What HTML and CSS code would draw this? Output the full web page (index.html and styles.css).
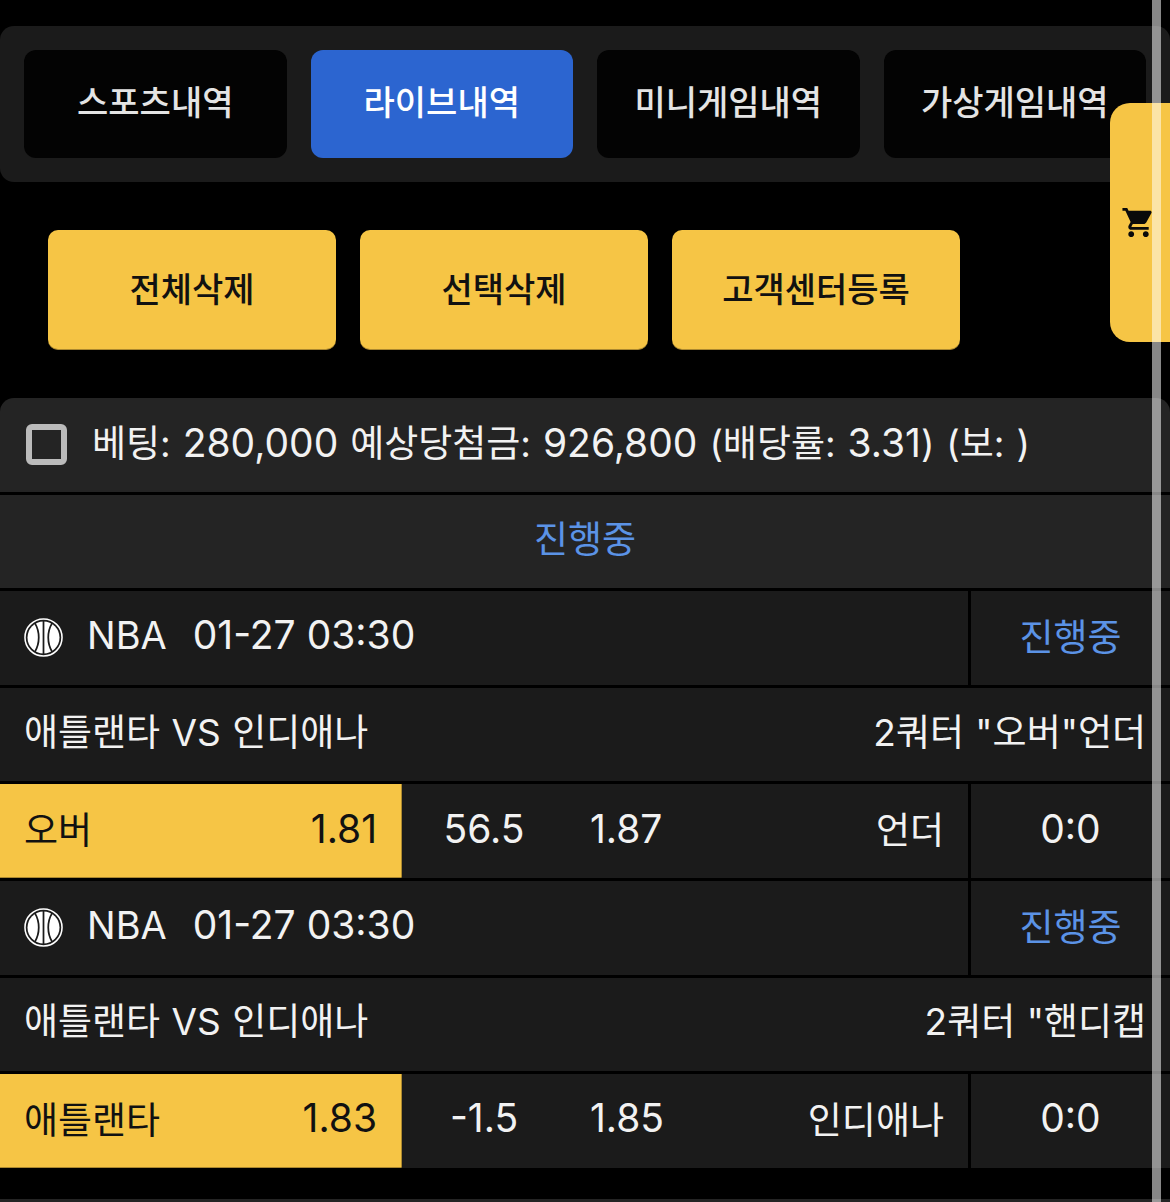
FILE: index.html
```html
<!DOCTYPE html>
<html lang="ko">
<head>
  <meta charset="utf-8">
  <title>라이브내역</title>
  <link rel="stylesheet" href="styles.css">
</head>
<body>
  <div class="tabs">
    <div class="tab">스포츠내역</div>
    <div class="tab active">라이브내역</div>
    <div class="tab">미니게임내역</div>
    <div class="tab">가상게임내역</div>
  </div>

  <div class="actions">
    <div class="action-button">전체삭제</div>
    <div class="action-button">선택삭제</div>
    <div class="action-button">고객센터등록</div>
  </div>

  <div class="bet-card">
    <div class="row summary">
      <span class="checkbox"></span>
      <span>베팅: <span class="num">280,000</span> 예상당첨금: <span class="num">926,800</span> (배당률: <span class="num">3.31</span>) (보: )</span>
    </div>
    <div class="row state">진행중</div>

    <div class="row">
      <div class="cell-main">
        <svg class="ball" viewBox="0 0 40 40">
          <circle cx="20" cy="20" r="19" fill="none" stroke="#fff" stroke-width="1.6"/>
          <circle cx="20" cy="20" r="16.4" fill="#fff"/>
          <path d="M20 3V37M11 5C16.5 14 16.5 26 11 35M29 5C23.5 14 23.5 26 29 35" fill="none" stroke="#1b1b1b" stroke-width="1.8"/>
        </svg>
        <span class="league">NBA</span>
        <span class="num">01-27 03:30</span>
      </div>
      <div class="cell-side status">진행중</div>
    </div>
    <div class="row teams">
      <span>애틀랜타 VS 인디애나</span>
      <span>2쿼터 "오버"언더</span>
    </div>
    <div class="row odds">
      <div class="pick selected"><span>오버</span><span class="num">1.81</span></div>
      <div class="line num">56.5</div>
      <div class="pick other"><span class="num">1.87</span><span>언더</span></div>
      <div class="cell-side num">0:0</div>
    </div>

    <div class="row">
      <div class="cell-main">
        <svg class="ball" viewBox="0 0 40 40">
          <circle cx="20" cy="20" r="19" fill="none" stroke="#fff" stroke-width="1.6"/>
          <circle cx="20" cy="20" r="16.4" fill="#fff"/>
          <path d="M20 3V37M11 5C16.5 14 16.5 26 11 35M29 5C23.5 14 23.5 26 29 35" fill="none" stroke="#1b1b1b" stroke-width="1.8"/>
        </svg>
        <span class="league">NBA</span>
        <span class="num">01-27 03:30</span>
      </div>
      <div class="cell-side status">진행중</div>
    </div>
    <div class="row teams">
      <span>애틀랜타 VS 인디애나</span>
      <span>2쿼터 "핸디캡</span>
    </div>
    <div class="row odds">
      <div class="pick selected"><span>애틀랜타</span><span class="num">1.83</span></div>
      <div class="line num">-1.5</div>
      <div class="pick other"><span class="num">1.85</span><span>인디애나</span></div>
      <div class="cell-side num">0:0</div>
    </div>
  </div>
  <div class="next-card"></div>

  <div class="cart-drawer">
    <svg viewBox="0 0 24 24" fill="currentColor">
      <path d="M7 18c-1.1 0-1.99.9-1.99 2S5.9 22 7 22s2-.9 2-2-.9-2-2-2zM1 2v2h2l3.6 7.59-1.35 2.45c-.16.28-.25.61-.25.96 0 1.1.9 2 2 2h12v-2H7.42c-.14 0-.25-.11-.25-.25l.03-.12.9-1.63h7.45c.75 0 1.41-.41 1.75-1.03l3.58-6.49c.08-.14.12-.31.12-.48 0-.55-.45-1-1-1H5.21l-.94-2H1zm16 16c-1.1 0-1.99.9-1.99 2s.89 2 1.99 2 2-.9 2-2-.9-2-2-2z"/>
    </svg>
  </div>
  <div class="scrollbar"></div>
</body>
</html>
```

FILE: styles.css
```css
html, body {
  margin: 0;
  height: 1202px;
  overflow: hidden;
  background: #000;
}
body {
  position: relative;
  padding-top: 26px;
  box-sizing: border-box;
  color: #f2f2f2;
  font-family: Inter, "Noto Sans CJK KR", sans-serif;
  font-size: 37px;
}
.num {
  font-size: 39px;
}
.tabs {
  display: grid;
  grid-template-columns: repeat(4, 1fr);
  gap: 24px;
  padding: 24px;
  background: #1b1b1b;
  border-radius: 14px;
}
.tab {
  height: 108px;
  box-sizing: border-box;
  padding-bottom: 7px;
  display: flex;
  align-items: center;
  justify-content: center;
  background: #030303;
  border-radius: 12px;
  color: #e4e4e4;
  font-size: 34px;
  font-weight: 500;
}
.tab.active {
  background: #2c65d0;
  color: #fff;
}
.actions {
  display: flex;
  gap: 24px;
  padding: 48px;
}
.action-button {
  width: 288px;
  height: 120px;
  box-sizing: border-box;
  padding-bottom: 6px;
  display: flex;
  align-items: center;
  justify-content: center;
  background: #f6c545;
  border-radius: 10px;
  box-shadow: inset 0 -1px rgba(0, 0, 0, 0.3);
  color: #111;
  font-size: 34px;
  font-weight: 500;
}
.bet-card {
  display: grid;
  grid-auto-rows: 93.6px;
  gap: 3px;
  border-radius: 14px 14px 0 0;
  overflow: hidden;
}
.row {
  display: flex;
  align-items: center;
  box-sizing: border-box;
  background: #1b1b1b;
}
.summary {
  gap: 25px;
  padding: 0 0 0 26px;
  background: #242424;
  word-spacing: 1.5px;
}
.summary > span:last-child {
  margin-top: -8px;
}
.checkbox {
  width: 41px;
  height: 41px;
  box-sizing: border-box;
  border: 6px solid #bbb;
  border-radius: 6px;
}
.state {
  justify-content: center;
  padding-bottom: 8px;
  background: #242424;
  color: #5b93e6;
}
.cell-main {
  flex: 1;
  display: flex;
  align-items: center;
  padding-left: 24px;
}
.cell-main span {
  margin-top: -6px;
}
.ball {
  width: 39px;
  height: 39px;
  margin-right: 24px;
}
.league {
  margin-right: 26px;
  font-size: 38px;
}
.cell-side {
  width: 202px;
  height: 100%;
  box-sizing: border-box;
  padding-bottom: 6px;
  display: flex;
  align-items: center;
  justify-content: center;
  border-left: 3px solid #000;
}
.status {
  color: #5b93e6;
}
.teams {
  justify-content: space-between;
  padding: 0 24px 10px;
  word-spacing: 1px;
}
.pick {
  height: 100%;
  display: flex;
  align-items: center;
  justify-content: space-between;
  box-sizing: border-box;
  padding: 0 25px 6px 24px;
}
.pick.selected {
  width: 402px;
  background: #f6c545;
  box-shadow: inset 0 -1px rgba(0, 0, 0, 0.3), inset -1px 0 rgba(0, 0, 0, 0.3);
  color: #111;
}
.pick.other {
  flex: 1;
  padding-right: 24px;
}
.line {
  width: 164px;
  padding-bottom: 6px;
  text-align: center;
}
.next-card {
  height: 10px;
  margin-top: 31px;
  background: #242424;
}
.cart-drawer {
  position: absolute;
  top: 103px;
  right: 0;
  width: 60px;
  height: 239px;
  display: flex;
  align-items: center;
  background: #f6c545;
  border-radius: 20px 0 0 20px;
  color: #0a0a0a;
}
.cart-drawer svg {
  width: 35px;
  height: 35px;
  margin-left: 11px;
}
.scrollbar {
  position: absolute;
  top: 0;
  bottom: 0;
  left: 1152px;
  width: 9px;
  background: rgba(255, 255, 255, 0.53);
}
```
